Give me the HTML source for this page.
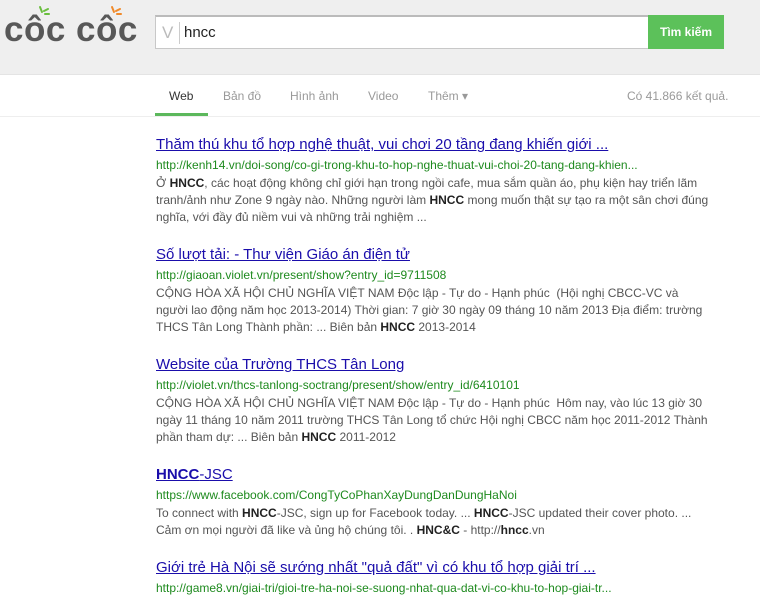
<!DOCTYPE html>
<html><head><meta charset="utf-8"><style>
*{margin:0;padding:0;box-sizing:border-box}
body{width:760px;height:596px;overflow:hidden;background:#fff;font-family:"Liberation Sans",Arial,sans-serif;position:relative}
.top{position:absolute;left:0;top:0;width:760px;height:75px;background:#efefef;border-bottom:1px solid #e4e4e4}
.logo{position:absolute;left:4px;top:10px;font:bold 35px "Liberation Sans",sans-serif;color:#585858;letter-spacing:0.5px}
.sb{position:absolute;left:155px;top:15px;width:494px;height:34px;background:#fff;border:1px solid #c8c8c8;border-top:2px solid #bbb}
.sb .v{position:absolute;left:6px;top:6px;font-size:17px;color:#bbb}
.sb .bar{position:absolute;left:23px;top:5px;width:1px;height:22px;background:#ccc}
.sb .q{position:absolute;left:28px;top:7px;font-size:15px;color:#222}
.btn{position:absolute;left:648px;top:15px;width:76px;height:34px;background:#5cc15a;color:#fff;font-size:12px;font-weight:bold;text-align:center;line-height:34px}
.nav{position:absolute;top:89px;font-size:12px;color:#999}
.ul{position:absolute;left:155px;top:113px;width:53px;height:3px;background:#5cb85c}
.navline{position:absolute;left:0;top:116px;width:760px;height:1px;background:#eee}
.r{position:absolute;left:156px;width:554px}
.t{font-size:15px;color:#1a0dab;text-decoration:underline;line-height:18px;white-space:nowrap}
.u{font-size:12px;color:#1e8a1e;line-height:16px;margin-top:3px;white-space:nowrap}
.s{font-size:12px;color:#555;line-height:17px;margin-top:2px}
b{color:#222}
</style></head><body>
<div class="top"></div>
<div class="logo">côc côc</div>
<svg style="position:absolute;left:0;top:0" width="150" height="25">
<g stroke="#6bbf3f" stroke-width="2" stroke-linecap="round"><line x1="40" y1="7" x2="42" y2="12"/><line x1="44" y1="11" x2="48" y2="9"/><line x1="45" y1="14" x2="49" y2="14"/></g>
<g stroke="#f08a2a" stroke-width="2" stroke-linecap="round"><line x1="112" y1="7" x2="114" y2="12"/><line x1="116" y1="11" x2="120" y2="9"/><line x1="117" y1="14" x2="121" y2="14"/></g>
</svg>
<div class="sb"><span class="v">V</span><span class="bar"></span><span class="q">hncc</span></div>
<div class="btn">Tìm kiếm</div>
<div class="nav" style="left:169px;color:#333">Web</div>
<div class="nav" style="left:223px">Bản đồ</div>
<div class="nav" style="left:290px">Hình ảnh</div>
<div class="nav" style="left:368px">Video</div>
<div class="nav" style="left:428px">Thêm ▾</div>
<div class="nav" style="left:627px">Có 41.866 kết quả.</div>
<div class="ul"></div><div class="navline"></div>

<div class="r" style="top:136px"><div class="t">Thăm thú khu tổ hợp nghệ thuật, vui chơi 20 tầng đang khiến giới ...</div>
<div class="u">http://kenh14.vn/doi-song/co-gi-trong-khu-to-hop-nghe-thuat-vui-choi-20-tang-dang-khien...</div>
<div class="s">Ở <b>HNCC</b>, các hoạt động không chỉ giới hạn trong ngồi cafe, mua sắm quần áo, phụ kiện hay triển lãm tranh/ảnh như Zone 9 ngày nào. Những người làm <b>HNCC</b> mong muốn thật sự tạo ra một sân chơi đúng nghĩa, với đầy đủ niềm vui và những trải nghiệm ...</div></div>

<div class="r" style="top:246px"><div class="t">Số lượt tải: - Thư viện Giáo án điện tử</div>
<div class="u">http://giaoan.violet.vn/present/show?entry_id=9711508</div>
<div class="s">CỘNG HÒA XÃ HỘI CHỦ NGHĨA VIỆT NAM Độc lập - Tự do - Hạnh phúc &nbsp;(Hội nghị CBCC-VC và người lao động năm học 2013-2014) Thời gian: 7 giờ 30 ngày 09 tháng 10 năm 2013 Địa điểm: trường THCS Tân Long Thành phần: ... Biên bản <b>HNCC</b> 2013-2014</div></div>

<div class="r" style="top:356px"><div class="t">Website của Trường THCS Tân Long</div>
<div class="u">http://violet.vn/thcs-tanlong-soctrang/present/show/entry_id/6410101</div>
<div class="s">CỘNG HÒA XÃ HỘI CHỦ NGHĨA VIỆT NAM Độc lập - Tự do - Hạnh phúc &nbsp;Hôm nay, vào lúc 13 giờ 30 ngày 11 tháng 10 năm 2011 trường THCS Tân Long tổ chức Hội nghị CBCC năm học 2011-2012 Thành phần tham dự: ... Biên bản <b>HNCC</b> 2011-2012</div></div>

<div class="r" style="top:466px"><div class="t"><b style="color:#1a0dab">HNCC</b>-JSC</div>
<div class="u">https://www.facebook.com/CongTyCoPhanXayDungDanDungHaNoi</div>
<div class="s">To connect with <b>HNCC</b>-JSC, sign up for Facebook today. ... <b>HNCC</b>-JSC updated their cover photo. ... Cảm ơn mọi người đã like và ủng hộ chúng tôi. . <b>HNC&amp;C</b> - http://<b>hncc</b>.vn</div></div>

<div class="r" style="top:559px"><div class="t">Giới trẻ Hà Nội sẽ sướng nhất "quả đất" vì có khu tổ hợp giải trí ...</div>
<div class="u">http://game8.vn/giai-tri/gioi-tre-ha-noi-se-suong-nhat-qua-dat-vi-co-khu-to-hop-giai-tr...</div></div>
</body></html>
